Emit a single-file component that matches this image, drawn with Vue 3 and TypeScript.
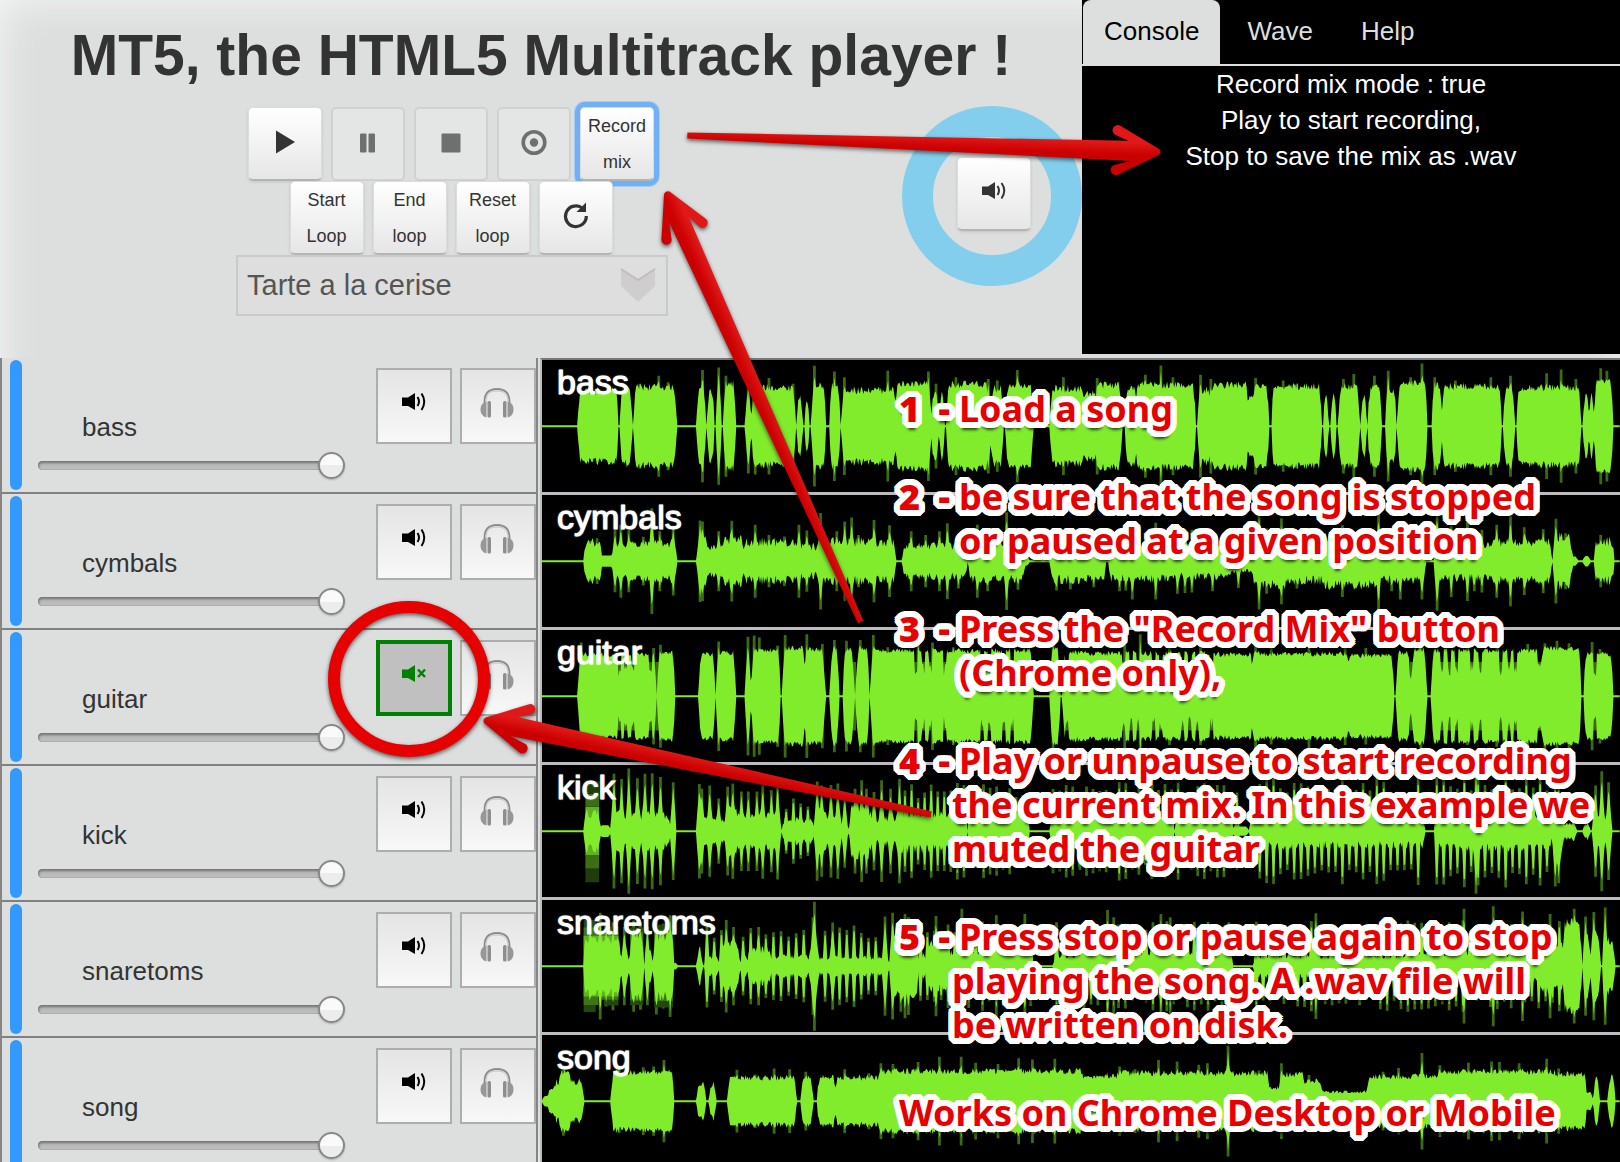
<script setup lang="ts">
import { ref } from 'vue'

type Seg = [number, number, number]
type Spike = [number, number]

interface Track {
  name: string
  muted: boolean
  volume: number
  segs: Seg[]
  spikes: Spike[]
  notches?: number[]
  combs?: [number, number, number, number][]
  noise: number
}

interface Arrow {
  x: number
  y: number
  angle: number
  length: number
  flip: number
}

const HALF = 1568
const MID = 203

const songs = ['Tarte a la cerise']
const song = ref(songs[0])
const tabs = ['Console', 'Wave', 'Help']
const log = ['Record mix mode : true', 'Play to start recording,', 'Stop to save the mix as .wav']

const right = <T extends number[]>(items: T[], bounds: number): T[] =>
  items.map((item) => item.map((v, i) => (i < bounds ? v + HALF : v)) as T)

const tracks = ref<Track[]>([
  {
    name: 'bass', muted: false, volume: 100, noise: 12,
    segs: [
      [110, 228, 106], [232, 268, 112], [272, 397, 118], [455, 482, 125], [485, 507, 105], [512, 527, 95], [533, 569, 128],
      [597, 613, 105], [614, 742, 116], [745, 763, 90], [768, 783, 90], [790, 830, 122], [840, 872, 120], [880, 1035, 108],
      [1030, 1132, 126], [1136, 1156, 98], [1158, 1176, 95], [1180, 1304, 126], [1308, 1346, 112], [1352, 1432, 126], [1481, 1580, 112],
      ...right([[-6, 52, 98], [44, 122, 124], [130, 166, 118], [160, 336, 124], [344, 382, 108], [380, 490, 124], [474, 510, 84], [500, 549, 118],
        [556, 702, 120], [706, 722, 92], [727, 745, 92], [750, 812, 120], [815, 833, 90], [836, 876, 120], [889, 919, 108], [921, 1009, 128],
        [1021, 1052, 124], [1050, 1225, 120], [1229, 1262, 120], [1268, 1455, 116], [1460, 1479, 90], [1477, 1494, 90], [1492, 1548, 132]] as Seg[], 2),
    ],
    spikes: [
      [345, 155], [290, 130], [372, 135], [472, 172], [519, 180], [540, 155], [605, 145], [625, 148], [665, 148], [735, 130], [797, 185], [855, 168],
      [884, 150], [1010, 170], [1128, 168], [1150, 130], [1208, 150], [1302, 145], [1328, 140], [1386, 172], [1520, 150],
      ...right([[50, 148], [190, 158], [235, 186], [270, 150], [350, 158], [380, 145], [510, 148], [590, 140], [630, 130], [765, 145], [795, 160],
        [855, 155], [895, 170], [960, 150], [993, 192], [1030, 150], [1090, 140], [1193, 150], [1250, 155], [1355, 162], [1397, 174], [1440, 145],
        [1512, 178], [1530, 170]] as Spike[], 1),
    ],
  },
  {
    name: 'cymbals', muted: false, volume: 100, noise: 16,
    segs: [
      [127, 180, 54], [170, 220, 17], [209, 398, 52], [455, 488, 78], [480, 536, 38], [528, 594, 62], [588, 746, 56], [738, 806, 42], [798, 836, 62],
      [826, 1034, 56], [1052, 1242, 44], [1244, 1410, 52], [1400, 1422, 14], [1481, 1580, 54],
      ...right([[-6, 76, 52], [82, 278, 50], [270, 446, 44], [436, 508, 30], [500, 606, 68], [598, 706, 56], [698, 866, 70], [858, 1004, 54],
        [1032, 1196, 48], [1188, 1370, 56], [1374, 1430, 70], [1422, 1446, 14], [1460, 1482, 16], [1492, 1552, 58]] as Seg[], 2),
    ],
    spikes: [
      [145, 62], [166, 70], [218, 95], [235, 112], [258, 95], [300, 75], [325, 162], [348, 92], [387, 105], [465, 125], [472, 122], [519, 92], [557, 124],
      [625, 112], [665, 80], [710, 76], [752, 112], [775, 94], [815, 148], [862, 92], [885, 122], [905, 134], [925, 80], [970, 126], [1015, 110],
      [1078, 92], [1120, 80], [1160, 92], [1183, 116], [1215, 84], [1270, 112], [1300, 92], [1355, 150], [1388, 88], [1500, 90], [1540, 86],
      ...right([[40, 80], [115, 92], [133, 90], [152, 118], [220, 118], [283, 100], [305, 98], [325, 96], [385, 92], [460, 82], [520, 148], [542, 100],
        [585, 132], [630, 84], [762, 110], [800, 84], [867, 148], [905, 92], [930, 118], [993, 118], [1037, 152], [1078, 110], [1125, 122], [1145, 92],
        [1167, 96], [1210, 112], [1250, 138], [1290, 104], [1345, 98], [1382, 130], [1410, 86], [1512, 80]] as Spike[], 1),
    ],
  },
  {
    name: 'guitar', muted: true, volume: 100, noise: 8,
    segs: [
      [110, 338, 126], [340, 393, 132], [461, 509, 126], [512, 569, 132], [597, 613, 140], [617, 699, 140], [708, 772, 146], [770, 827, 142],
      [842, 869, 140], [879, 913, 140], [917, 957, 144], [963, 1432, 138], [1481, 1511, 145], [1517, 1580, 132],
      ...right([[-6, 384, 130], [374, 504, 126], [496, 784, 128], [774, 912, 122], [918, 962, 132], [962, 1007, 142], [1020, 1344, 138], [1336, 1456, 144], [1462, 1548, 126]] as Seg[], 2),
    ],
    spikes: [
      [120, 165], [330, 148], [350, 158], [519, 168], [604, 182], [622, 186], [637, 180], [690, 155], [712, 188], [775, 190], [820, 160], [855, 172],
      [890, 170], [930, 172], [968, 188], [1010, 150], [1098, 172], [1140, 165], [1200, 150], [1490, 160],
      ...right([[130, 160], [175, 190], [260, 150], [350, 150], [510, 160], [555, 148], [665, 160], [770, 150], [830, 148], [990, 160], [1060, 145],
        [1125, 150], [1210, 155], [1300, 160], [1350, 162], [1385, 170], [1420, 162], [1487, 166], [1510, 145]] as Spike[], 1),
    ],
    notches: [
      230, 250, 271, 320, 340, 913, 1092, 1113, 1134, 1176, 1285, 1306, 1348, 1371, 1530,
      ...[127, 147, 168, 213, 235, 298, 320, 341, 382, 962, 1050, 1072, 1092, 1138, 1162, 1223, 1245, 1265, 1334, 1495].map((x) => x + HALF),
    ],
  },
  {
    name: 'kick', muted: false, volume: 100, noise: 18,
    segs: [
      [127, 176, 50], [172, 206, 18], [207, 378, 46], [370, 396, 22], [455, 548, 34], [536, 578, 62], [568, 702, 46], [702, 797, 32], [796, 878, 46],
      [878, 898, 20], [898, 964, 66], [958, 1034, 34], [1028, 1242, 52], [1244, 1422, 50], [1481, 1580, 46],
      ...right([[-6, 272, 46], [276, 436, 42], [440, 490, 14], [492, 644, 44], [636, 1002, 40], [1032, 1372, 48], [1374, 1406, 62], [1400, 1442, 24],
        [1460, 1482, 22], [1492, 1546, 40]] as Seg[], 2),
    ],
    spikes: [
      [215, 176], [237, 160], [258, 192], [283, 162], [305, 176], [326, 178], [350, 166], [387, 150], [463, 145], [470, 130], [493, 140], [519, 100],
      [545, 136], [560, 146], [585, 122], [605, 122], [630, 122], [647, 146], [672, 126], [690, 148], [805, 152], [818, 140], [845, 142], [865, 146],
      [885, 112], [915, 130], [934, 156], [948, 130], [970, 120], [992, 156], [1018, 130], [1044, 160],
      ...right([[1515, 184], [1535, 150], [1497, 140], [1380, 170], [1390, 160], [1150, 192]] as Spike[], 1),
    ],
    combs: [[715, 790, 21, 96], [1060, 1420, 19, 138], [1490, 1568, 19, 150], [1568, 2040, 19, 140], [2090, 2560, 20, 158], [2604, 2940, 20, 165]],
  },
  {
    name: 'snaretoms', muted: false, volume: 100, noise: 16,
    segs: [
      [126, 236, 74], [238, 260, 40], [260, 302, 92], [304, 328, 42], [330, 390, 90], [386, 400, 12], [455, 472, 50], [477, 522, 24], [523, 580, 62],
      [580, 606, 26], [602, 674, 48], [666, 784, 28], [780, 812, 70], [808, 1016, 24], [1018, 1100, 84], [1100, 1124, 30], [1124, 1186, 66],
      [1184, 1432, 40], [1490, 1580, 26],
      ...right([[-6, 445, 40], [504, 956, 28], [944, 1336, 36], [1326, 1408, 66], [1400, 1457, 130], [1460, 1484, 80], [1482, 1512, 100], [1516, 1554, 76]] as Seg[], 2),
    ],
    spikes: [
      [145, 130], [175, 164], [192, 124], [212, 135], [245, 120], [272, 140], [292, 134], [312, 120], [338, 148], [358, 130], [378, 156], [541, 142],
      [562, 120], [635, 120], [797, 198], [793, 150], [850, 134], [1002, 152], [1024, 164], [1048, 140], [1060, 160], [1070, 150], [1150, 154],
      [1225, 176], [1325, 156], [1408, 160],
      ...right([[80, 172], [98, 150], [235, 160], [262, 150], [685, 162], [1115, 176], [1200, 184], [1285, 168], [1365, 160], [1435, 176], [1468, 152],
        [1492, 166], [1525, 180]] as Spike[], 1),
    ],
    combs: [[485, 530, 21, 120], [590, 780, 22, 122], [828, 990, 21, 118], [1105, 1430, 20, 128], [1500, 2010, 20, 130], [2080, 2960, 20, 130]],
  },
  {
    name: 'song', muted: false, volume: 100, noise: 10,
    segs: [
      [6, 34, 16], [22, 60, 40], [40, 62, 58], [52, 94, 88], [84, 127, 58], [206, 390, 86], [455, 483, 52], [491, 512, 50], [545, 745, 70], [758, 793, 74],
      [804, 860, 70], [856, 992, 70], [980, 1580, 90],
      ...right([[-6, 116, 76], [100, 552, 84], [540, 586, 38], [580, 654, 80], [640, 706, 62], [690, 846, 28], [832, 1044, 74], [1034, 1386, 88],
        [1374, 1472, 80], [1464, 1490, 26], [1491, 1508, 76], [1533, 1554, 76]] as Seg[], 2),
    ],
    spikes: [
      [68, 106], [230, 98], [300, 104], [330, 106], [360, 126], [572, 96], [625, 82], [680, 100], [725, 98], [772, 90], [885, 98], [955, 86], [990, 116],
      [1025, 114], [1098, 120], [1160, 136], [1223, 136], [1265, 118], [1330, 114], [1390, 132], [1430, 128], [1495, 130],
      ...right([[115, 106], [160, 98], [228, 126], [282, 122], [345, 112], [370, 116], [430, 170], [520, 94], [585, 116], [665, 80], [880, 90], [925, 102],
        [993, 148], [1045, 110], [1128, 118], [1195, 122], [1218, 120], [1275, 116], [1355, 130], [1390, 100]] as Spike[], 1),
    ],
  },
])

/* Deterministic noise, so that a waveform keeps its shape between renders. */
function randomizer(seed: number) {
  let s = seed
  return () => {
    s = (s * 1103515245 + 12345) % 2147483648
    return s / 2147483648
  }
}

function bodyPath(t: Track, seed: number) {
  const rnd = randomizer(seed)
  const top: string[] = []
  const bottom: string[] = []
  for (let x = 0; x <= HALF * 2; x += 3) {
    let amp = 0
    for (const [a, b, h] of t.segs) {
      if (x < a || x > b) continue
      const edge = Math.min(x - a, b - x)
      amp = Math.max(amp, h * Math.min(1, Math.sqrt(edge / 8)))
    }
    const n = rnd()
    if (amp > 20) amp += (n - 0.4) * t.noise * 2 * Math.min(1, amp / 60)
    for (const [sx, h] of t.spikes) {
      const d = Math.abs(x - sx)
      if (d < 9) amp = Math.max(amp, h * (1 - d / 11) * 0.9)
    }
    for (const nx of t.notches ?? []) {
      if (Math.abs(x - nx) < 5) amp = Math.min(amp, 60 + n * 40)
    }
    amp = Math.max(3, amp)
    top.push(`${x},${(MID - amp).toFixed(1)}`)
    bottom.unshift(`${x},${(MID + amp).toFixed(1)}`)
  }
  return `M${top.join('L')}L${bottom.join('L')}Z`
}

function bar(x: number, w: number, h: number) {
  return `M${x - w},${MID}L${x - w * 0.8},${MID - h}H${x + w * 0.8}L${x + w},${MID}L${x + w * 0.8},${MID + h}H${x - w * 0.8}Z`
}

function hazePath(t: Track, seed: number) {
  const rnd = randomizer(seed + 71)
  let d = t.spikes.map(([x, h]) => bar(x, 5, h)).join('')
  for (const x of t.notches ?? []) d += bar(x, 6, 105)
  for (const [a, b, step, h] of t.combs ?? []) {
    for (let x = a; x <= b; x += step) d += bar(x, 5, Math.round(h * (0.72 + rnd() * 0.36)))
  }
  return d
}

function combPath(t: Track, seed: number) {
  const rnd = randomizer(seed + 71)
  let d = ''
  for (const [a, b, step, h] of t.combs ?? []) {
    for (let x = a; x <= b; x += step) {
      const y = Math.round(h * (0.72 + rnd() * 0.36))
      d += `M${x - 8},${MID}L${x - 2},${MID - y * 0.86}H${x + 2}L${x + 8},${MID}L${x + 2},${MID + y * 0.86}H${x - 2}Z`
    }
  }
  return d
}

const waves = tracks.value.map((t, i) => ({
  name: t.name,
  body: bodyPath(t, 17 + i * 31),
  haze: hazePath(t, 17 + i * 31),
  comb: combPath(t, 17 + i * 31),
}))

const steps = [
  { no: '1', lines: ['Load a song'], hang: false },
  { no: '2', lines: ['be sure that the song is stopped', 'or paused at a given position'], hang: false },
  { no: '3', lines: ['Press the "Record Mix" button', '(Chrome only),'], hang: false },
  { no: '4', lines: ['Play or unpause to start recording', 'the current mix. In this example we', 'muted the guitar'], hang: true },
  { no: '5', lines: ['Press stop or pause again to stop', 'playing the song. A .wav file will', 'be written on disk.'], hang: true },
]

const arrows: Arrow[] = [
  { x: 1161, y: 152, angle: 2, length: 474, flip: 1 },
  { x: 666, y: 191, angle: 245.7, length: 473, flip: -1 },
  { x: 483, y: 720, angle: 191.9, length: 458, flip: -1 },
]

function arrowPath(length: number) {
  return `M${-length},-3L-33,-10L-46,-15.5A5,5 0 0 1 -42,-25L-2,-3Q1,0 -2,3L-42,24A5,5 0 0 1 -47,15L-30,10L${-length},3Z`
}
</script>

<template>
  <main class="page">
    <header class="top">
      <section class="deck">
        <h1>MT5, the HTML5 Multitrack player !</h1>
        <div class="deck-row">
          <div class="controls">
            <div class="btn-row">
              <button class="btn" type="button" aria-label="Play">
                <svg width="28" height="28" viewBox="0 0 28 28"><path d="M5 2.500L24 14L5 25.500Z" fill="#333" /></svg>
              </button>
              <button class="btn" type="button" disabled aria-label="Pause">
                <svg width="28" height="28" viewBox="0 0 28 28"><rect x="6" y="4.500" width="6.500" height="19" rx="1" /><rect x="14.500" y="4.500" width="6.500" height="19" rx="1" /></svg>
              </button>
              <button class="btn" type="button" disabled aria-label="Stop">
                <svg width="28" height="28" viewBox="0 0 28 28"><rect x="4.500" y="4.500" width="19" height="19" rx="1" /></svg>
              </button>
              <button class="btn" type="button" disabled aria-label="Record">
                <svg width="28" height="28" viewBox="0 0 28 28"><circle cx="14" cy="13.500" r="10.800" fill="none" stroke="#6e706f" stroke-width="3.600" /><circle cx="14" cy="13.500" r="4.200" /></svg>
              </button>
              <button class="btn focused" type="button">Record<br />mix</button>
            </div>
            <div class="btn-row front">
              <button class="btn" type="button">Start<br />Loop</button>
              <button class="btn" type="button">End<br />loop</button>
              <button class="btn" type="button">Reset<br />loop</button>
              <button class="btn" type="button" aria-label="Reload">
                <svg width="28" height="32" viewBox="0 0 28 32"><path d="M19.500 7.500A10.400 10.400 0 1 0 24.300 16" fill="none" stroke="#333" stroke-width="3.200" /><path d="M24 2.500V12H14.500Z" fill="#333" /></svg>
              </button>
            </div>
            <div class="picker">
              <select v-model="song" aria-label="Song">
                <option v-for="s in songs" :key="s">{{ s }}</option>
              </select>
              <svg class="chevron" width="36" height="36" viewBox="0 0 36 36">
                <path d="M1 2L18 13L35 2V19L18 35L1 19Z" fill="#cfcdce" />
                <path d="M1 2L18 13L35 2" fill="none" stroke="#bfbdbe" stroke-width="2" />
              </svg>
            </div>
          </div>
          <div class="dial">
            <button class="btn" type="button" aria-label="Master volume">
              <svg width="26" height="20" viewBox="0 0 26 20"><path d="M1 5.500H7L14 1V18L7 14H1Z" fill="#333" /><path d="M16.500 5Q19.500 9.500 16.500 14M20.500 2Q26 9.500 20.500 17.500" fill="none" stroke="#333" stroke-width="2" /></svg>
            </button>
          </div>
        </div>
      </section>
      <section class="side">
        <nav class="tabs">
          <a v-for="(tab, i) in tabs" :key="tab" href="#" :class="{ active: i === 0 }">{{ tab }}</a>
        </nav>
        <p v-for="line in log" :key="line">{{ line }}</p>
      </section>
    </header>

    <div class="mixer">
      <section class="strips">
        <div v-for="track in tracks" :key="track.name" class="strip">
          <span class="level"></span>
          <div class="fader">
            <label :for="'vol-' + track.name">{{ track.name }}</label>
            <input :id="'vol-' + track.name" v-model.number="track.volume" type="range" min="0" max="100" />
          </div>
          <div class="strip-btns">
            <button class="tool" :class="{ muted: track.muted }" type="button" aria-label="Mute" @click="track.muted = !track.muted">
              <svg width="26" height="20" viewBox="0 0 26 20">
                <path d="M1 5.500H7L14 1V18L7 14H1Z" fill="currentColor" />
                <path v-if="track.muted" d="M17 5.500L24 13M24 5.500L17 13" fill="none" stroke="currentColor" stroke-width="2.400" />
                <path v-else d="M16.500 5Q19.500 9.500 16.500 14M20.500 1.500Q26 9.500 20.500 18" fill="none" stroke="currentColor" stroke-width="2" />
              </svg>
            </button>
            <button class="tool solo" type="button" aria-label="Solo">
              <svg width="34" height="30" viewBox="0 0 34 30">
                <path d="M4.500 15C4 5 9 1 17 1S30 5 29.500 15" fill="none" stroke="#8c8c8c" stroke-width="1.800" />
                <path d="M6 14C6 6 10 3 17 3S28 6 28 14" fill="none" stroke="#c4c4c4" stroke-width="1" />
                <path d="M6.500 13.500C-1.500 15 -1.500 28 6.500 29.500Z" fill="#979797" /><rect x="7.500" y="13" width="3.500" height="16.500" rx="1.500" fill="#8e8e8e" />
                <path d="M27.500 13.500C35.500 15 35.500 28 27.500 29.500Z" fill="#979797" /><rect x="23" y="13" width="3.500" height="16.500" rx="1.500" fill="#8e8e8e" />
              </svg>
            </button>
          </div>
        </div>
      </section>

      <section class="waves">
        <figure v-for="wave in waves" :key="wave.name" class="wave">
          <svg viewBox="6 0 3130 405" preserveAspectRatio="none" aria-hidden="true">
            <path :d="wave.haze" fill="#80ec2b" opacity="0.45" />
            <g v-if="wave.name === 'kick'">
              <path d="M132 128H172V278H132Z" fill="#5fb221" />
              <path d="M132 88H172V128H132ZM132 278H172V318H132Z" fill="#3a6f15" />
              <path d="M132 50H172V88H132ZM132 318H172V360H132Z" fill="#1f3d0b" />
            </g>
            <g v-if="wave.name === 'snaretoms'">
              <path d="M127 62H162V344H127ZM186 82H228V324H186ZM262 84H300V322H262ZM332 76H386V330H332Z" fill="#234710" />
              <path d="M127 84H170V322H127ZM180 100H228V306H180ZM262 98H300V308H262ZM332 96H386V310H332Z" fill="#3d7416" />
              <path d="M127 110H228V296H127Z" fill="#5fb221" />
            </g>
            <path :d="wave.comb" fill="#80ec2b" />
            <path :d="wave.body" fill="#80ec2b" />
          </svg>
          <figcaption>{{ wave.name }}</figcaption>
        </figure>
      </section>
    </div>

    <svg class="marks" width="1620" height="1162" viewBox="0 0 1620 1162" aria-hidden="true">
      <defs>
        <linearGradient id="red" gradientUnits="userSpaceOnUse" x1="0" y1="-12" x2="0" y2="8">
          <stop offset="0.200" stop-color="#e01818" />
          <stop offset="0.800" stop-color="#cb0000" />
        </linearGradient>
      </defs>
      <ellipse cx="409" cy="679" rx="75" ry="72" fill="none" stroke="#e60000" stroke-width="12" />
      <g v-for="a in arrows" :key="a.y" :transform="`translate(${a.x} ${a.y}) rotate(${a.angle}) scale(1 ${a.flip})`">
        <path :d="arrowPath(a.length)" fill="url(#red)" />
      </g>
    </svg>

    <aside class="guide">
      <div v-for="step in steps" :key="step.no" class="step" :class="{ hang: step.hang }">
        <span class="no"><b>{{ step.no }}</b><b>-</b></span>
        <p><span v-for="line in step.lines" :key="line">{{ line }}</span></p>
      </div>
      <p class="note">Works on Chrome Desktop or Mobile</p>
    </aside>
  </main>
</template>

<style>
body {
  margin: 0;
  background: #dddfde;
}
</style>

<style scoped>
.page {
  position: relative;
  height: 100vh;
  overflow: hidden;
  background: #dddfde;
  box-shadow: inset 0 0 40px rgba(255, 255, 255, 0.7);
  color: #333;
  font: 26px/36px "Liberation Sans", Arial, sans-serif;
}
p, h1, figure { margin: 0; }
.top {
  display: flex;
  align-items: flex-start;
  min-height: 358px;
}
.deck { flex: 1; }
h1 {
  padding: 20px 0 16px;
  font-size: 57px;
  line-height: 70px;
  text-align: center;
  white-space: nowrap;
}
.deck-row {
  display: flex;
  justify-content: space-between;
  align-items: flex-start;
  padding-left: 236px;
}
.controls {
  width: 432px;
  padding-top: 1px;
}
.btn-row {
  display: flex;
  justify-content: center;
  gap: 9px;
  padding-right: 2px;
}
.front { position: relative; }
.btn {
  display: flex;
  align-items: center;
  justify-content: center;
  box-sizing: border-box;
  width: 74px;
  height: 74px;
  padding: 0;
  border: 1px solid #dcdcdc;
  border-bottom: 2px solid #b4b4b4;
  border-radius: 5px;
  background: linear-gradient(#fff, #e6e6e6);
  box-shadow: 0 1px 3px rgba(0, 0, 0, 0.12);
  color: #333;
  font: 18px/36px "Liberation Sans", Arial, sans-serif;
}
.btn:disabled {
  border: 2px solid #d0d1d1;
  background: #e4e5e5;
  box-shadow: none;
  fill: #6e706f;
}
.btn svg { margin-bottom: 3px; }
.btn.focused {
  box-shadow: 0 0 0 5px #70b0f4, 0 0 0 6px #a9cbee;
}
.picker { position: relative; }
.picker select {
  display: block;
  box-sizing: border-box;
  width: 100%;
  height: 61px;
  padding: 0 48px 2px 9px;
  border: 2px solid #c9cacb;
  border-radius: 0;
  appearance: none;
  background: #dedede;
  color: #555;
  font: 29px "Liberation Sans", Arial, sans-serif;
}
.chevron {
  position: absolute;
  top: 12px;
  right: 12px;
}
.dial {
  display: flex;
  align-items: center;
  justify-content: center;
  box-sizing: border-box;
  width: 180px;
  height: 180px;
  padding: 0 0 4px 4px;
  border: 31px solid #84ceed;
  border-radius: 50%;
}
.dial .btn { flex: none; }
.dial svg { margin-bottom: 6px; }
.side {
  flex: 0 0 538px;
  min-height: 354px;
  background: #000;
  color: #fff;
  text-align: center;
}
.tabs {
  display: flex;
  gap: 6px;
  height: 64px;
  padding-left: 1px;
  border-bottom: 2px solid #dddfde;
}
.tabs a {
  height: 51px;
  padding: 13px 21px 0;
  border-radius: 8px 8px 0 0;
  color: #dddfde;
  text-decoration: none;
}
.tabs a.active {
  background: #dddfde;
  color: #000;
}
.mixer {
  display: flex;
  gap: 2px;
  align-items: flex-start;
}
.strips {
  box-sizing: border-box;
  flex: 0 0 538px;
  border: solid #858585;
  border-width: 0 2px;
  background: #dddfde;
}
.strip {
  display: flex;
  align-items: flex-start;
  height: 134px;
  border-bottom: 2px solid #808080;
}
.level {
  width: 12px;
  height: 130px;
  margin: 2px 16px 0 8px;
  border-radius: 6px;
  background: #3399ff;
}
.fader {
  display: flex;
  flex-direction: column;
  gap: 7px;
  width: 307px;
  padding-top: 51px;
}
.fader label { padding-left: 44px; }
.fader input {
  width: 100%;
  height: 27px;
  margin: 0;
  appearance: none;
  background: none;
}
.fader input::-webkit-slider-runnable-track {
  height: 9px;
  border-radius: 5px;
  background: linear-gradient(#777, #b4b4b4 40%, #bfbfbf 80%, #acacac);
  box-shadow: inset 1px 1px 2px #777;
}
.fader input::-webkit-slider-thumb {
  box-sizing: border-box;
  width: 27px;
  height: 27px;
  margin-top: -9px;
  border: 2px solid #888;
  border-radius: 50%;
  appearance: none;
  background: linear-gradient(#fafafa 50%, #ececec 50%);
  box-shadow: 0 1px 2px rgba(0, 0, 0, 0.2);
}
.strip-btns {
  display: flex;
  gap: 8px;
  margin: 10px 0 0 auto;
}
.tool {
  display: flex;
  align-items: flex-start;
  justify-content: center;
  box-sizing: border-box;
  width: 76px;
  height: 76px;
  padding: 22px 0 0;
  border: 2px solid #adadad;
  background: linear-gradient(#e4e4e4, #f8f8f8);
  color: #000;
}
.tool.solo { padding: 18px 2px 0 0; }
.tool.muted {
  padding-top: 20px;
  border: 4px solid #008000;
  background: #c0c0c0;
  color: #008000;
}
.waves {
  flex: 1;
  min-width: 0;
}
.wave {
  position: relative;
  box-sizing: border-box;
  height: 135px;
  border: solid #bdbbbd;
  border-width: 2px 0 1px 2px;
  background: #000;
}
.wave:first-child { border-top-color: #777; }
.wave svg {
  display: block;
  width: 100%;
  height: 132px;
}
.wave figcaption {
  position: absolute;
  top: 4px;
  left: 15px;
  color: #fff;
  font-size: 34px;
  -webkit-text-stroke: 1px #fff;
  text-shadow: 0 0 2px #fff;
}
.marks {
  position: absolute;
  top: 0;
  left: 0;
  filter: drop-shadow(0 2px 2px rgba(0, 0, 0, 0.6));
  pointer-events: none;
}
.guide {
  position: absolute;
  top: 387px;
  left: 899px;
  color: #e60000;
  font: bold 36px/44px "Noto Sans", "Open Sans", sans-serif;
  white-space: nowrap;
  text-shadow: 6px 0 #fff, 6px 2px #fff, 5px 3px #fff, 4px 4px #fff, 3px 5px #fff, 2px 6px #fff, 0 6px #fff, -2px 6px #fff,
    -3px 5px #fff, -4px 4px #fff, -5px 3px #fff, -6px 2px #fff, -6px 0 #fff, -6px -2px #fff, -5px -3px #fff, -4px -4px #fff,
    -3px -5px #fff, -2px -6px #fff, 0 -6px #fff, 2px -6px #fff, 3px -5px #fff, 4px -4px #fff, 5px -3px #fff, 6px -2px #fff,
    3px 0 #fff, 2px 2px #fff, 0 3px #fff, -2px 2px #fff, -3px 0 #fff, -2px -2px #fff, 0 -3px #fff, 2px -2px #fff,
    0 8px 3px rgba(0, 0, 0, 0.7);
}
.step {
  display: flex;
  margin-bottom: 44px;
}
.step .no {
  display: flex;
  justify-content: space-between;
  width: 51px;
  margin-right: 9px;
}
.step p span { display: block; }
.hang p span + span { margin-left: -7px; }
</style>
